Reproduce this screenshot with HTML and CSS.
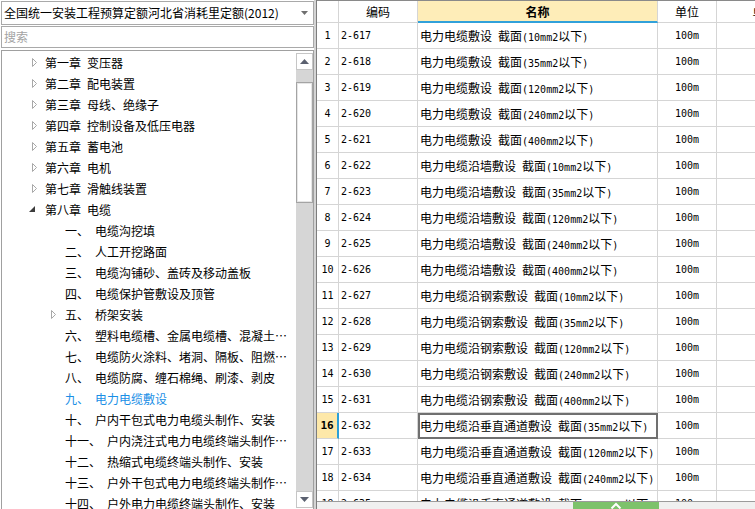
FILE: index.html
```html
<!DOCTYPE html>
<html lang="zh-CN">
<head>
<meta charset="utf-8">
<title>定额库</title>
<link rel="stylesheet" href="styles.css">
</head>
<body>
<div class="app">
  <div class="left">
    <div class="select">
      <span class="select-text">全国统一安装工程预算定额河北省消耗里定额(2012)</span>
      <svg class="select-arrow" width="7" height="4" viewBox="0 0 7 4"><polygon points="0,0 7,0 3.5,4" fill="#6f6f6f"/></svg>
    </div>
    <div class="search">搜索</div>
    <div class="tree">
      <div class="tree-body">
        <div class="node l1"><span class="tg"><svg width="16" height="21" viewBox="0 0 16 21"><polygon points="3.5,6.5 7.5,10.5 3.5,14.5" fill="#fff" stroke="#a8a8a8"/></svg></span><span class="lbl">第一章<span class="sp"></span>变压器</span></div>
        <div class="node l1"><span class="tg"><svg width="16" height="21" viewBox="0 0 16 21"><polygon points="3.5,6.5 7.5,10.5 3.5,14.5" fill="#fff" stroke="#a8a8a8"/></svg></span><span class="lbl">第二章<span class="sp"></span>配电装置</span></div>
        <div class="node l1"><span class="tg"><svg width="16" height="21" viewBox="0 0 16 21"><polygon points="3.5,6.5 7.5,10.5 3.5,14.5" fill="#fff" stroke="#a8a8a8"/></svg></span><span class="lbl">第三章<span class="sp"></span>母线、绝缘子</span></div>
        <div class="node l1"><span class="tg"><svg width="16" height="21" viewBox="0 0 16 21"><polygon points="3.5,6.5 7.5,10.5 3.5,14.5" fill="#fff" stroke="#a8a8a8"/></svg></span><span class="lbl">第四章<span class="sp"></span>控制设备及低压电器</span></div>
        <div class="node l1"><span class="tg"><svg width="16" height="21" viewBox="0 0 16 21"><polygon points="3.5,6.5 7.5,10.5 3.5,14.5" fill="#fff" stroke="#a8a8a8"/></svg></span><span class="lbl">第五章<span class="sp"></span>蓄电池</span></div>
        <div class="node l1"><span class="tg"><svg width="16" height="21" viewBox="0 0 16 21"><polygon points="3.5,6.5 7.5,10.5 3.5,14.5" fill="#fff" stroke="#a8a8a8"/></svg></span><span class="lbl">第六章<span class="sp"></span>电机</span></div>
        <div class="node l1"><span class="tg"><svg width="16" height="21" viewBox="0 0 16 21"><polygon points="3.5,6.5 7.5,10.5 3.5,14.5" fill="#fff" stroke="#a8a8a8"/></svg></span><span class="lbl">第七章<span class="sp"></span>滑触线装置</span></div>
        <div class="node l1"><span class="tg"><svg width="16" height="21" viewBox="0 0 16 21"><polygon points="6,7 6,13 0,13" fill="#3c3c3c"/></svg></span><span class="lbl">第八章<span class="sp"></span>电缆</span></div>
        <div class="node l2"><span class="tg"></span><span class="lbl">一、<span class="sp"></span>电缆沟挖填</span></div>
        <div class="node l2"><span class="tg"></span><span class="lbl">二、<span class="sp"></span>人工开挖路面</span></div>
        <div class="node l2"><span class="tg"></span><span class="lbl">三、<span class="sp"></span>电缆沟铺砂、盖砖及移动盖板</span></div>
        <div class="node l2"><span class="tg"></span><span class="lbl">四、<span class="sp"></span>电缆保护管敷设及顶管</span></div>
        <div class="node l2"><span class="tg"><svg width="17" height="21" viewBox="0 0 17 21"><polygon points="3.5,6.5 7.5,10.5 3.5,14.5" fill="#fff" stroke="#a8a8a8"/></svg></span><span class="lbl">五、<span class="sp"></span>桥架安装</span></div>
        <div class="node l2"><span class="tg"></span><span class="lbl">六、<span class="sp"></span>塑料电缆槽、金属电缆槽、混凝土电缆槽安装</span></div>
        <div class="node l2"><span class="tg"></span><span class="lbl">七、<span class="sp"></span>电缆防火涂料、堵洞、隔板、阻燃槽盒安装</span></div>
        <div class="node l2"><span class="tg"></span><span class="lbl">八、<span class="sp"></span>电缆防腐、缠石棉绳、刷漆、剥皮</span></div>
        <div class="node l2 active"><span class="tg"></span><span class="lbl">九、<span class="sp"></span>电力电缆敷设</span></div>
        <div class="node l2"><span class="tg"></span><span class="lbl">十、<span class="sp"></span>户内干包式电力电缆头制作、安装</span></div>
        <div class="node l2"><span class="tg"></span><span class="lbl">十一、<span class="sp"></span>户内浇注式电力电缆终端头制作、安装</span></div>
        <div class="node l2"><span class="tg"></span><span class="lbl">十二、<span class="sp"></span>热缩式电缆终端头制作、安装</span></div>
        <div class="node l2"><span class="tg"></span><span class="lbl">十三、<span class="sp"></span>户外干包式电力电缆终端头制作、安装</span></div>
        <div class="node l2"><span class="tg"></span><span class="lbl">十四、<span class="sp"></span>户外电力电缆终端头制作、安装</span></div>
      </div>
      <div class="vscroll">
        <div class="sbbtn"><svg width="9" height="5" viewBox="0 0 9 5"><polygon points="0,5 9,5 4.5,0" fill="#5b6170"/></svg></div>
        <div class="sbtrack"><div class="sbthumb"></div></div>
        <div class="sbbtn"><svg width="9" height="5" viewBox="0 0 9 5"><polygon points="0,0 9,0 4.5,5" fill="#5b6170"/></svg></div>
      </div>
    </div>
  </div>
  <div class="splitter"></div>
  <div class="right">
    <div class="grid">
      <div class="row head">
        <div class="cell"></div>
        <div class="cell">编码</div>
        <div class="cell hl">名称</div>
        <div class="cell">单位</div>
        <div class="cell">单价</div>
      </div>
      <div class="row"><div class="cell rn">1</div><div class="cell code">2-617</div><div class="cell">电力电缆敷设<span class="a"> </span>截面<span class="a">(10mm2</span>以下<span class="a">)</span></div><div class="cell c">100m</div><div class="cell"></div></div>
      <div class="row"><div class="cell rn">2</div><div class="cell code">2-618</div><div class="cell">电力电缆敷设<span class="a"> </span>截面<span class="a">(35mm2</span>以下<span class="a">)</span></div><div class="cell c">100m</div><div class="cell"></div></div>
      <div class="row"><div class="cell rn">3</div><div class="cell code">2-619</div><div class="cell">电力电缆敷设<span class="a"> </span>截面<span class="a">(120mm2</span>以下<span class="a">)</span></div><div class="cell c">100m</div><div class="cell"></div></div>
      <div class="row"><div class="cell rn">4</div><div class="cell code">2-620</div><div class="cell">电力电缆敷设<span class="a"> </span>截面<span class="a">(240mm2</span>以下<span class="a">)</span></div><div class="cell c">100m</div><div class="cell"></div></div>
      <div class="row"><div class="cell rn">5</div><div class="cell code">2-621</div><div class="cell">电力电缆敷设<span class="a"> </span>截面<span class="a">(400mm2</span>以下<span class="a">)</span></div><div class="cell c">100m</div><div class="cell"></div></div>
      <div class="row"><div class="cell rn">6</div><div class="cell code">2-622</div><div class="cell">电力电缆沿墙敷设<span class="a"> </span>截面<span class="a">(10mm2</span>以下<span class="a">)</span></div><div class="cell c">100m</div><div class="cell"></div></div>
      <div class="row"><div class="cell rn">7</div><div class="cell code">2-623</div><div class="cell">电力电缆沿墙敷设<span class="a"> </span>截面<span class="a">(35mm2</span>以下<span class="a">)</span></div><div class="cell c">100m</div><div class="cell"></div></div>
      <div class="row"><div class="cell rn">8</div><div class="cell code">2-624</div><div class="cell">电力电缆沿墙敷设<span class="a"> </span>截面<span class="a">(120mm2</span>以下<span class="a">)</span></div><div class="cell c">100m</div><div class="cell"></div></div>
      <div class="row"><div class="cell rn">9</div><div class="cell code">2-625</div><div class="cell">电力电缆沿墙敷设<span class="a"> </span>截面<span class="a">(240mm2</span>以下<span class="a">)</span></div><div class="cell c">100m</div><div class="cell"></div></div>
      <div class="row"><div class="cell rn">10</div><div class="cell code">2-626</div><div class="cell">电力电缆沿墙敷设<span class="a"> </span>截面<span class="a">(400mm2</span>以下<span class="a">)</span></div><div class="cell c">100m</div><div class="cell"></div></div>
      <div class="row"><div class="cell rn">11</div><div class="cell code">2-627</div><div class="cell">电力电缆沿钢索敷设<span class="a"> </span>截面<span class="a">(10mm2</span>以下<span class="a">)</span></div><div class="cell c">100m</div><div class="cell"></div></div>
      <div class="row"><div class="cell rn">12</div><div class="cell code">2-628</div><div class="cell">电力电缆沿钢索敷设<span class="a"> </span>截面<span class="a">(35mm2</span>以下<span class="a">)</span></div><div class="cell c">100m</div><div class="cell"></div></div>
      <div class="row"><div class="cell rn">13</div><div class="cell code">2-629</div><div class="cell">电力电缆沿钢索敷设<span class="a"> </span>截面<span class="a">(120mm2</span>以下<span class="a">)</span></div><div class="cell c">100m</div><div class="cell"></div></div>
      <div class="row"><div class="cell rn">14</div><div class="cell code">2-630</div><div class="cell">电力电缆沿钢索敷设<span class="a"> </span>截面<span class="a">(240mm2</span>以下<span class="a">)</span></div><div class="cell c">100m</div><div class="cell"></div></div>
      <div class="row"><div class="cell rn">15</div><div class="cell code">2-631</div><div class="cell">电力电缆沿钢索敷设<span class="a"> </span>截面<span class="a">(400mm2</span>以下<span class="a">)</span></div><div class="cell c">100m</div><div class="cell"></div></div>
      <div class="row"><div class="cell rn cur">16</div><div class="cell code">2-632</div><div class="cell sel">电力电缆沿垂直通道敷设<span class="a"> </span>截面<span class="a">(35mm2</span>以下<span class="a">)</span></div><div class="cell c">100m</div><div class="cell"></div></div>
      <div class="row"><div class="cell rn">17</div><div class="cell code">2-633</div><div class="cell">电力电缆沿垂直通道敷设<span class="a"> </span>截面<span class="a">(120mm2</span>以下<span class="a">)</span></div><div class="cell c">100m</div><div class="cell"></div></div>
      <div class="row"><div class="cell rn">18</div><div class="cell code">2-634</div><div class="cell">电力电缆沿垂直通道敷设<span class="a"> </span>截面<span class="a">(240mm2</span>以下<span class="a">)</span></div><div class="cell c">100m</div><div class="cell"></div></div>
      <div class="row"><div class="cell rn">19</div><div class="cell code">2-635</div><div class="cell">电力电缆沿垂直通道敷设<span class="a"> </span>截面<span class="a">(400mm2</span>以下<span class="a">)</span></div><div class="cell c">100m</div><div class="cell"></div></div>
    </div>
    <div class="hbar">
      <div class="tab"><svg width="12" height="7" viewBox="0 0 12 7"><polyline points="1.5,6.5 6,2 10.5,6.5" fill="none" stroke="#fff" stroke-width="2"/></svg></div>
    </div>
  </div>
</div>
</body>
</html>
```

FILE: styles.css
```css
html, body {
  margin: 0;
  padding: 0;
  background: #fff;
}

body {
  font-family: "Noto Sans CJK SC", "Noto Sans", sans-serif;
  font-size: 12px;
  color: #000;
}

.app {
  display: flex;
  width: 755px;
  height: 509px;
  overflow: hidden;
}

/* ---------- left panel ---------- */
.left {
  width: 314px;
  flex: none;
  padding: 1px 0 0 1px;
  box-sizing: border-box;
  display: flex;
  flex-direction: column;
}

.select {
  height: 24px;
  border: 1px solid #a9a9a9;
  box-sizing: border-box;
  display: flex;
  align-items: center;
  justify-content: space-between;
  padding: 0 5px 0 2px;
  line-height: 22px;
  white-space: nowrap;
}

.select-arrow {
  flex: none;
}

.search {
  margin-top: 1px;
  height: 22px;
  border: 1px solid #a9a9a9;
  box-sizing: border-box;
  padding-left: 2px;
  line-height: 20px;
  color: #a3a3a3;
}

.tree {
  margin-top: 2px;
  height: 470px;
  flex: none;
  border: 1px solid #a0a0a0;
  box-sizing: border-box;
  display: flex;
}

.tree-body {
  flex: 1;
  min-width: 0;
  padding-top: 1px;
  overflow: hidden;
}

.node {
  display: flex;
  height: 21px;
  line-height: 21px;
  padding-right: 6px;
  white-space: nowrap;
}

.node .tg {
  flex: none;
  height: 21px;
}

.node .tg svg {
  display: block;
}

.l1 {
  padding-left: 27px;
}

.l1 .tg {
  width: 16px;
}

.l2 {
  padding-left: 46px;
}

.l2 .tg {
  width: 17px;
}

.node .lbl {
  min-width: 0;
  overflow: hidden;
  text-overflow: ellipsis;
}

.sp {
  display: inline-block;
  width: 6px;
}

.node.active {
  color: #1a8fe6;
}

.vscroll {
  width: 17px;
  flex: none;
  height: 457px;
  padding-top: 2px;
  box-sizing: border-box;
  display: flex;
  flex-direction: column;
}

.sbbtn {
  height: 17px;
  flex: none;
  border: 1px solid #c6c6c6;
  background: #fff;
  box-sizing: border-box;
  display: flex;
  align-items: center;
  justify-content: center;
}

.sbtrack {
  flex: 1;
  background: #d6d6d6;
  padding-top: 12px;
}

.sbthumb {
  height: 121px;
  background: #fff;
  border: 1px solid #a4a4a4;
  box-shadow: inset 0 0 0 1px #e6e6e6;
  box-sizing: border-box;
}

/* ---------- splitter ---------- */
.splitter {
  width: 3px;
  flex: none;
  background: #d4d4d4;
  border-right: 1px solid #7d7d7d;
  box-sizing: border-box;
}

/* ---------- right panel ---------- */
.right {
  flex: 1;
  min-width: 0;
  display: flex;
  flex-direction: column;
  overflow: hidden;
}

.grid {
  flex: 1;
  overflow: hidden;
}

.row {
  display: grid;
  grid-template-columns: 22px 79px 240px 59px 96px;
  height: 26px;
}

.cell {
  border-right: 1px solid #d5d5d5;
  border-bottom: 1px solid #d5d5d5;
  box-sizing: border-box;
  padding-left: 2px;
  line-height: 25px;
  white-space: nowrap;
  overflow: hidden;
}

.cell .a,
.cell.code,
.cell.rn,
.cell.c {
  font-family: "DejaVu Sans Mono", "Liberation Mono", monospace;
  font-size: 10px;
}

.row.head {
  height: 23px;
  border-top: 1px solid #8a8a8a;
  box-sizing: border-box;
}

.head .cell {
  padding: 1px 0 0;
  line-height: 20px;
  text-align: center;
}

.head .cell.hl {
  background: #feedb8;
  border-bottom: 2px solid #31a1da;
  font-weight: bold;
}

.cell.rn {
  padding: 0;
  text-align: center;
}

.cell.rn.cur {
  background: #fde8a9;
  font-weight: bold;
  font-size: 11px;
  border-right: 2px solid #2b9fd8;
}

.cell.c {
  padding: 0;
  text-align: center;
}

.cell.sel {
  outline: 2px solid #707070;
  outline-offset: -2px;
}

.hbar {
  height: 8px;
  flex: none;
  border-top: 1px solid #9b9b9b;
  background: #f0f0f0;
  box-sizing: border-box;
}

.tab {
  margin-left: 256px;
  width: 86px;
  height: 7px;
  background: #7dc26b;
  display: flex;
  justify-content: center;
  overflow: hidden;
}

.tab svg {
  display: block;
}
```
